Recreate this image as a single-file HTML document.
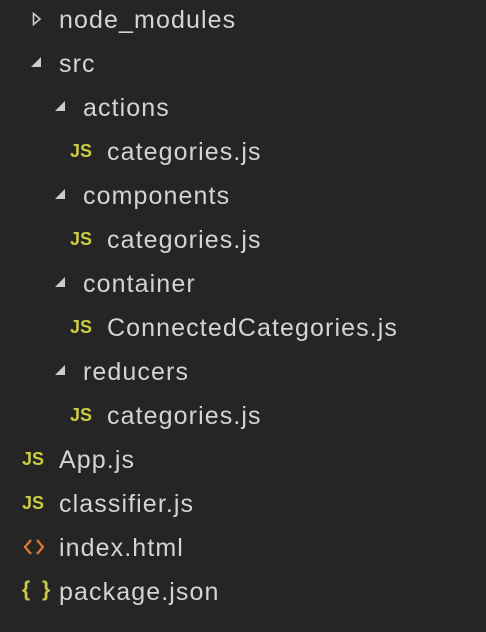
<!DOCTYPE html>
<html><head><style>
html,body{margin:0;padding:0;background:#252526;width:486px;height:632px;overflow:hidden}
.r{position:absolute;height:44px;line-height:44px;font-family:"Liberation Sans",sans-serif;font-size:25px;letter-spacing:1.1px;color:#d4d4d4;white-space:nowrap}
.js{position:absolute;font-family:"Liberation Sans",sans-serif;font-weight:bold;font-size:18px;color:#cbcb41;letter-spacing:0}
.tw{position:absolute}
</style></head><body>
<div class="r" style="top:-2px;left:59px">node_modules</div>
<svg class="tw" style="left:32px;top:12px" width="10" height="14"><path d="M1.5 1.5 L8 7 L1.5 12.5 Z" fill="none" stroke="#ccc" stroke-width="1.6"/></svg>

<div class="r" style="top:42px;left:59px">src</div>
<svg class="tw" style="left:30px;top:56px" width="12" height="12"><path d="M11 1 L11 11 L1 11 Z" fill="#ccc"/></svg>

<div class="r" style="top:86px;left:83px">actions</div>
<svg class="tw" style="left:54px;top:100px" width="12" height="12"><path d="M11 1 L11 11 L1 11 Z" fill="#ccc"/></svg>
<div class="js" style="left:70px;top:141px">JS</div>
<div class="r" style="top:130px;left:107px">categories.js</div>

<div class="r" style="top:174px;left:83px">components</div>
<svg class="tw" style="left:54px;top:188px" width="12" height="12"><path d="M11 1 L11 11 L1 11 Z" fill="#ccc"/></svg>
<div class="js" style="left:70px;top:229px">JS</div>
<div class="r" style="top:218px;left:107px">categories.js</div>

<div class="r" style="top:262px;left:83px">container</div>
<svg class="tw" style="left:54px;top:276px" width="12" height="12"><path d="M11 1 L11 11 L1 11 Z" fill="#ccc"/></svg>
<div class="js" style="left:70px;top:317px">JS</div>
<div class="r" style="top:306px;left:107px">ConnectedCategories.js</div>

<div class="r" style="top:350px;left:83px">reducers</div>
<svg class="tw" style="left:54px;top:364px" width="12" height="12"><path d="M11 1 L11 11 L1 11 Z" fill="#ccc"/></svg>
<div class="js" style="left:70px;top:405px">JS</div>
<div class="r" style="top:394px;left:107px">categories.js</div>

<div class="js" style="left:22px;top:449px">JS</div>
<div class="r" style="top:438px;left:59px">App.js</div>
<div class="js" style="left:22px;top:493px">JS</div>
<div class="r" style="top:482px;left:59px">classifier.js</div>
<svg class="tw" style="left:23px;top:538px" width="22" height="18"><path d="M8 2 L2 9 L8 16 M14 2 L20 9 L14 16" fill="none" stroke="#e37933" stroke-width="2.2"/></svg>
<div class="r" style="top:526px;left:59px">index.html</div>
<div class="js" style="left:22px;top:578px;font-size:21px;letter-spacing:3px">{ }</div>
<div class="r" style="top:570px;left:59px">package.json</div>
</body></html>
